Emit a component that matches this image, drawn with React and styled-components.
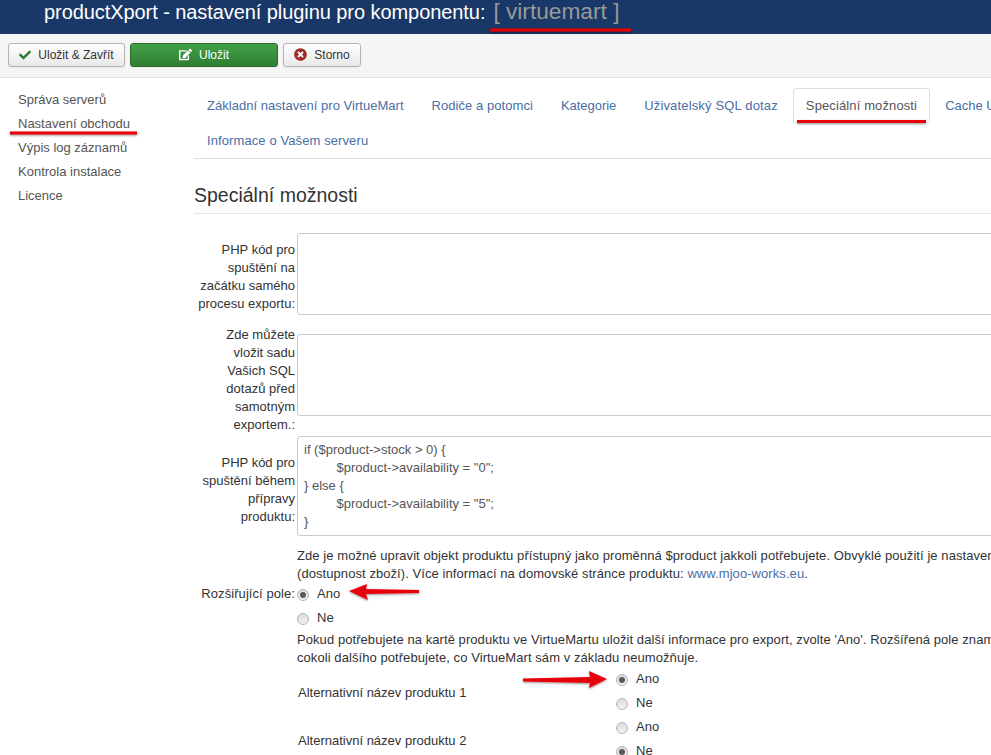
import React from "react";
import styled, { createGlobalStyle } from "styled-components";
import { FaCheck, FaEdit, FaTimesCircle } from "react-icons/fa";

const Global = createGlobalStyle`
  html, body { margin: 0; padding: 0; background: #fff; }
  body { font-family: "Liberation Sans", Arial, sans-serif; font-size: 13px; line-height: 18px; color: #333; }
  * { box-sizing: border-box; }
`;

const Page = styled.div`
  position: relative;
  width: 991px;
  height: 755px;
  overflow: hidden;
  background: #fff;
`;
const Header = styled.header`
  height: 34px;
  background: #1a3867;
  padding: 0 0 11px 44px;
  display: flex;
  align-items: center;
  white-space: nowrap;
`;
const Title = styled.h1`
  margin: 0;
  font-size: 20px;
  line-height: 22px;
  font-weight: 400;
  color: #fff;
  letter-spacing: -0.07px;
`;
const Muted = styled.span`
  margin-left: 8px;
  color: #999;
  font-size: 22.7px;
  letter-spacing: 0;
`;
const Toolbar = styled.div`
  height: 44px;
  background: #f5f5f5;
  border-bottom: 1px solid #e1e1e1;
  padding: 9px 8px 0;
  display: flex;
  gap: 5px;
  align-items: flex-start;
`;
const Btn = styled.button`
  height: 24px;
  width: ${(p) => p.$w}px;
  padding: 0 0 1px;
  display: flex;
  align-items: center;
  justify-content: center;
  gap: 7px;
  font: 12px/18px "Liberation Sans", Arial, sans-serif;
  color: ${(p) => (p.$primary ? "#fff" : "#333")};
  background: ${(p) => (p.$primary ? "linear-gradient(#43a047,#2f7d32)" : "linear-gradient(#fff,#e8e8e8)")};
  border: 1px solid ${(p) => (p.$primary ? "#2a6a2d" : "#b3b3b3")};
  border-radius: 3px;
  box-shadow: 0 1px 2px rgba(0,0,0,.05);
`;
const Layout = styled.div`
  display: grid;
  grid-template-columns: 194px 1000px;
`;
const Side = styled.nav`
  padding: 10px 0 0 18px;
  display: flex;
  flex-direction: column;
`;
const SideLink = styled.a`
  height: 24px;
  line-height: 24px;
  color: #555;
  white-space: nowrap;
`;
const Main = styled.main`
  padding-top: 10px;
`;
const Tabs = styled.div`
  display: flex;
  flex-wrap: wrap;
  align-content: flex-start;
  width: 1000px;
  height: 71px;
  border-bottom: 1px solid #ddd;
`;
const TabBreak = styled.div`
  flex-basis: 100%;
  height: 0;
`;
const Tab = styled.a`
  height: 35px;
  margin: 0 2px 0 0;
  padding: 8px 12px;
  line-height: 18px;
  white-space: nowrap;
  letter-spacing: ${(p) => p.$ls || 0}px;
  border: 1px solid ${(p) => (p.$active ? "#ddd" : "transparent")};
  border-bottom: 0;
  border-radius: 4px 4px 0 0;
  color: ${(p) => (p.$active ? "#555" : "#4a6ea5")};
`;
const Heading = styled.h2`
  margin: 25px 0 19px;
  padding-bottom: 7px;
  font-size: 19.5px;
  line-height: 22px;
  font-weight: 400;
  color: #333;
  border-bottom: 1px solid #e5e5e5;
`;
const FormRow = styled.div`
  display: grid;
  grid-template-columns: 103px 1fr;
  align-items: ${(p) => p.$align || "center"};
  margin: ${(p) => p.$mt || 0}px 0 ${(p) => p.$mb || 0}px;
`;
const Label = styled.label`
  text-align: right;
  line-height: ${(p) => p.$lh || 18}px;
  letter-spacing: ${(p) => p.$ls || 0}px;
  color: #333;
  padding-right: 2px;
  padding-top: ${(p) => p.$pt || 0}px;
  margin-top: ${(p) => p.$mt || 0}px;
`;
const Area = styled.div`
  height: ${(p) => p.$h}px;
  border: 1px solid #ccc;
  border-radius: 3px;
  padding: 4px 6px;
  font-size: 13px;
  line-height: 18px;
  color: #555;
  white-space: pre-wrap;
  tab-size: 9;
`;
const Help = styled.p`
  margin: 0 0 0 103px;
  line-height: 18px;
  white-space: nowrap;
  letter-spacing: 0.07px;
  color: #333;
`;
const HelpLink = styled.a`
  color: #4a6ea5;
`;
const RadioGroup = styled.div`
  display: flex;
  flex-direction: column;
`;
const RadioRow = styled.div`
  display: flex;
  align-items: center;
  height: 24px;
  gap: 8px;
`;
const Radio = styled.span`
  width: 12px;
  height: 12px;
  border-radius: 50%;
  margin-top: 2px;
  border: 1px solid #b4b4b4;
  background: linear-gradient(#dcdcdc,#f2f2f2);
  display: flex;
  align-items: center;
  justify-content: center;
  &::after {
    content: "";
    width: 6px;
    height: 6px;
    border-radius: 50%;
    background: ${(p) => (p.$on ? "#5a5a5a" : "transparent")};
  }
`;
const AltRow = styled.div`
  display: grid;
  grid-template-columns: 318px 1fr;
  margin-left: 104px;
  align-items: center;
`;
const AltLabel = styled.span`
  padding-top: 3px;
`;
const Overlay = styled.svg`
  position: absolute;
  inset: 0;
  pointer-events: none;
`;

const Choice = ({ on }) => (
  <RadioGroup>
    <RadioRow><Radio $on={on} />Ano</RadioRow>
    <RadioRow><Radio $on={!on} />Ne</RadioRow>
  </RadioGroup>
);

export default function App() {
  return (
    <Page>
      <Global />
      <Header>
        <Title>productXport - nastavení pluginu pro komponentu:<Muted>[ virtuemart ]</Muted></Title>
      </Header>
      <Toolbar>
        <Btn $w={117}><FaCheck color="#2f7d32" size={12} />Uložit &amp; Zavřít</Btn>
        <Btn $w={148} $primary><FaEdit color="#fff" size={13} />Uložit</Btn>
        <Btn $w={78}><FaTimesCircle color="#a02b2b" size={13} />Storno</Btn>
      </Toolbar>
      <Layout>
        <Side>
          <SideLink>Správa serverů</SideLink>
          <SideLink>Nastavení obchodu</SideLink>
          <SideLink>Výpis log záznamů</SideLink>
          <SideLink>Kontrola instalace</SideLink>
          <SideLink>Licence</SideLink>
        </Side>
        <Main>
          <Tabs>
            <Tab $ls={0.03}>Základní nastavení pro VirtueMart</Tab>
            <Tab $ls={0.06}>Rodiče a potomci</Tab>
            <Tab $ls={-0.05}>Kategorie</Tab>
            <Tab $ls={0.16}>Uživatelský SQL dotaz</Tab>
            <Tab $active $ls={0.12}>Speciální možnosti</Tab>
            <Tab>Cache Už</Tab>
            <TabBreak />
            <Tab $ls={0.1}>Informace o Vašem serveru</Tab>
          </Tabs>
          <Heading>Speciální možnosti</Heading>
          <FormRow $mb={19}>
            <Label $pt={6}>PHP kód pro spuštění na začátku samého procesu exportu:</Label>
            <Area $h={82} />
          </FormRow>
          <FormRow $align="start" $mb={2}>
            <Label $mt={-8}>Zde můžete vložit sadu Vašich SQL dotazů před samotným exportem.:</Label>
            <Area $h={82} />
          </FormRow>
          <FormRow $mb={11}>
            <Label $pt={8}>PHP kód pro spuštění během přípravy produktu:</Label>
            <Area $h={100}>{`if ($product->stock > 0) {
\t$product->availability = "0";
} else {
\t$product->availability = "5";
}`}</Area>
          </FormRow>
          <Help>Zde je možné upravit objekt produktu přístupný jako proměnná $product jakkoli potřebujete. Obvyklé použití je nastavení<br />(dostupnost zboží). Více informací na domovské stránce produktu: <HelpLink>www.mjoo-works.eu</HelpLink>.</Help>
          <FormRow $align="start" $mt={-1} $mb={1}>
            <Label $lh={24} $ls={0.07}>Rozšiřující pole:</Label>
            <Choice on />
          </FormRow>
          <Help>Pokud potřebujete na kartě produktu ve VirtueMartu uložit další informace pro export, zvolte 'Ano'. Rozšířená pole znamenají<br />cokoli dalšího potřebujete, co VirtueMart sám v základu neumožňuje.</Help>
          <AltRow>
            <AltLabel>Alternativní název produktu 1</AltLabel>
            <Choice on />
          </AltRow>
          <AltRow>
            <AltLabel>Alternativní název produktu 2</AltLabel>
            <Choice />
          </AltRow>
        </Main>
      </Layout>
      <Overlay width="991" height="755" viewBox="0 0 991 755">
        <defs>
          <filter id="s" x="-20%" y="-200%" width="140%" height="500%">
            <feDropShadow dx="0" dy="1" stdDeviation="1" floodColor="#000" floodOpacity=".45" />
          </filter>
        </defs>
        <g fill="#e8000b" filter="url(#s)">
          <rect x="490" y="28.5" width="141" height="3" />
          <rect x="10" y="131.5" width="127" height="3" />
          <rect x="797" y="120" width="129" height="3" />
          <path d="M349 591 L367 584 L366 589 L419 590 L419 593 L366 594 L368 600 Z" />
          <path d="M607 679 L589 671 L590 677 L523 678.5 L523 681.5 L590 683 L589 688 Z" />
        </g>
      </Overlay>
    </Page>
  );
}
